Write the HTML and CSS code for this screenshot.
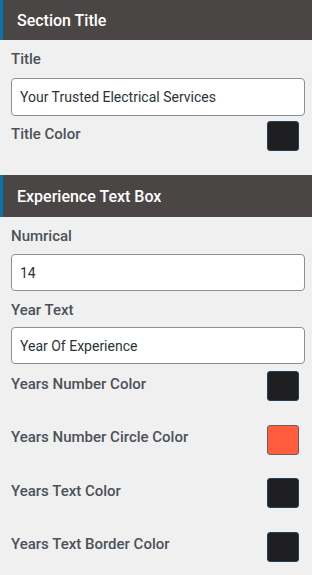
FILE: index.html
```html
<!DOCTYPE html>
<html>
<head>
<meta charset="utf-8">
<link rel="stylesheet" href="styles.css">
</head>
<body>
<div class="panel">
  <div class="section-head">Section Title</div>
  <div class="section-body">
    <div class="label first">Title</div>
    <div class="input">Your Trusted Electrical Services</div>
    <div class="color-row single">
      <span class="label">Title Color</span>
      <span class="swatch dark"></span>
    </div>
  </div>
  <div class="section-head second">Experience Text Box</div>
  <div class="section-body">
    <div class="label first">Numrical</div>
    <div class="input short">14</div>
    <div class="label mid">Year Text</div>
    <div class="input short near">Year Of Experience</div>
    <div class="color-list">
      <div class="color-row"><span class="label">Years Number Color</span><span class="swatch dark"></span></div>
      <div class="color-row"><span class="label">Years Number Circle Color</span><span class="swatch orange"></span></div>
      <div class="color-row"><span class="label">Years Text Color</span><span class="swatch dark"></span></div>
      <div class="color-row"><span class="label">Years Text Border Color</span><span class="swatch dark"></span></div>
    </div>
  </div>
</div>
</body>
</html>
```
FILE: styles.css
```css
html, body {
  margin: 0;
  padding: 0;
  background: #f0f0f0;
  font-family: Roboto, "Liberation Sans", sans-serif;
}
.panel {
  width: 312px;
}
.section-head {
  height: 40px;
  box-sizing: border-box;
  background: #4b4646;
  border-left: 3px solid #0a73aa;
  padding-left: 14px;
  display: flex;
  align-items: center;
  color: #ffffff;
  font-size: 16px;
  font-weight: 500;
}
.section-head.second {
  margin-top: 24px;
  height: 42px;
}
.section-body {
  padding: 0 7px 0 11px;
}
.label {
  font-size: 15px;
  font-weight: 500;
  line-height: 20px;
  color: #4c5259;
}
.label.first {
  margin-top: 9px;
}
.label.mid {
  margin-top: 9px;
}
.input {
  margin-top: 9px;
  height: 38px;
  box-sizing: border-box;
  background: #ffffff;
  border: 1px solid #8c8f94;
  border-radius: 4px;
  padding-left: 8px;
  display: flex;
  align-items: center;
  font-size: 14px;
  color: #2c3338;
}
.input.short {
  height: 37px;
  margin-top: 8px;
}
.input.near {
  margin-top: 7px;
}
.color-row {
  display: flex;
  align-items: center;
  justify-content: space-between;
  padding-right: 6px;
  height: 30px;
}
.color-row .label {
  margin-bottom: 5px;
}
.color-row.single {
  margin-top: 5px;
}
.color-list {
  margin-top: 7px;
  display: flex;
  flex-direction: column;
  gap: 23.5px;
}
.swatch {
  width: 32px;
  height: 30px;
  box-sizing: border-box;
  border-radius: 3px;
  border: 1px solid #24425c;
}
.swatch.dark {
  background: #1f1f21;
}
.swatch.orange {
  background: #ff5d3b;
  border-color: #6e5a70;
}
```
